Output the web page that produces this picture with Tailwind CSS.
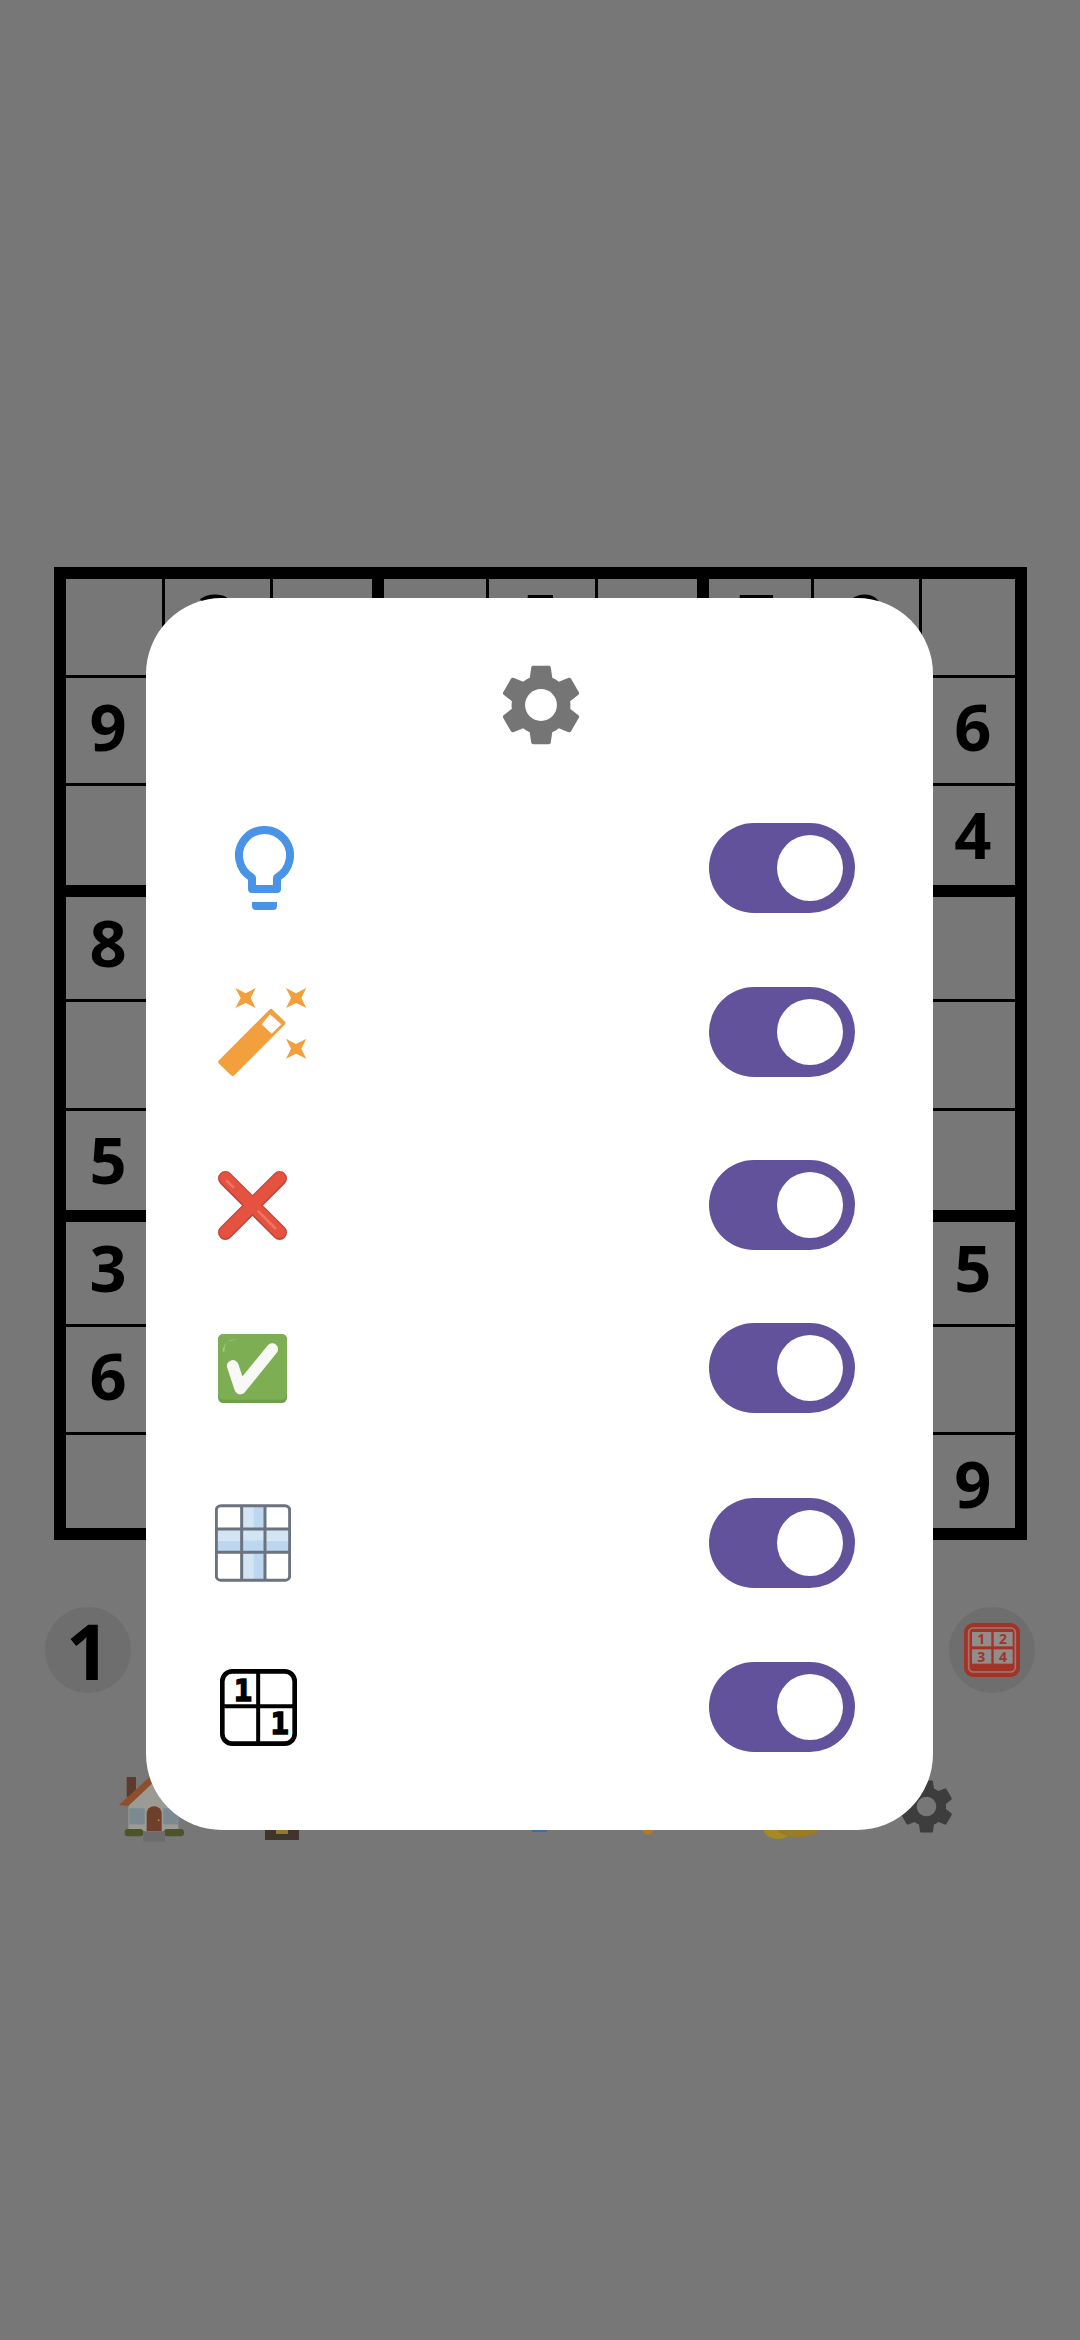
<!DOCTYPE html>
<html lang="en">
<head>
    <meta charset="utf-8">
    <title>Sudoku settings</title>
    <script src="https://cdn.jsdelivr.net/npm/@tailwindcss/browser@4"></script>
</head>
<body class="relative w-[1080px] h-[2340px] overflow-hidden bg-[#777777] font-['Noto_Sans',sans-serif]">
    <!-- Board -->
    <div class="pt-[567px] pl-[54px]">
        <div id="board" class="grid grid-cols-9 grid-rows-9 w-[973px] h-[973px]"></div>
    </div>

    <!-- Number pad, only the two ends show past the dialog -->
    <div class="flex justify-between items-center mt-[67px] px-[45px]">
        <div class="flex items-center justify-center w-[86px] h-[86px] rounded-full bg-[#6e6e6e]">
            <span class="text-[77px] leading-none font-bold text-black">1</span>
        </div>
        <div class="flex items-center justify-center w-[86px] h-[86px] rounded-full bg-[#6e6e6e]">
            <svg class="w-[56px] h-[54px]" viewBox="552 365 168 162">
                <rect x="552" y="365" width="168" height="162" rx="28" fill="#a03428"/>
                <rect x="566" y="380" width="140" height="132" rx="14" fill="#a03428" stroke="#a8746c" stroke-width="5"/>
                <rect x="576" y="392" width="58" height="43" fill="#928c8a"/>
                <rect x="641" y="392" width="57" height="43" fill="#928c8a"/>
                <rect x="576" y="444" width="58" height="43" fill="#928c8a"/>
                <rect x="641" y="444" width="57" height="43" fill="#928c8a"/>
                <g fill="#a03428" font-size="42" font-weight="700" text-anchor="middle" font-family="Noto Sans">
                    <text x="604" y="429">1</text>
                    <text x="669" y="429">2</text>
                    <text x="604" y="481">3</text>
                    <text x="669" y="481">4</text>
                </g>
            </svg>
        </div>
    </div>

    <!-- Bottom nav, mostly behind the dialog -->
    <div class="flex items-end h-[65px] mt-[84px] pl-[119px]">
        <svg class="w-[65px] h-[65px] shrink-0" viewBox="357 828 195 195">
            <rect x="380" y="828" width="28" height="60" fill="#5f3a2c"/>
            <polygon points="385,905 460,835 535,905 535,990 385,990" fill="#9b9a94"/>
            <polygon points="357,912 452,825 470,835 385,915" fill="#8f4f2c"/>
            <rect x="388" y="922" width="46" height="48" fill="#7a8a90"/>
            <rect x="490" y="922" width="46" height="48" fill="#7a8a90"/>
            <path d="M440 990 V938 a22 22 0 0 1 45 0 V990 Z" fill="#6e3f2a"/>
            <circle cx="476" cy="958" r="3" fill="#b0902c"/>
            <rect x="374" y="984" width="56" height="22" rx="10" fill="#4b5527"/>
            <rect x="492" y="984" width="60" height="22" rx="10" fill="#4b5527"/>
            <rect x="430" y="992" width="65" height="30" fill="#6c6c6c"/>
        </svg>
        <div class="shrink-0 flex justify-center w-[34px] h-[10px] mb-[2px] ml-[81px] bg-[#41342c]"><div class="w-[12px] h-[4px] bg-[#8f7a30]"></div></div>
        <div class="shrink-0 w-[15px] h-[3px] mb-[10px] ml-[233px] bg-[#3a6ea5]"></div>
        <div class="shrink-0 w-[10px] h-[6px] mb-[7px] ml-[96px] bg-[#b37a28] rounded-b-full"></div>
        <svg class="shrink-0 w-[54px] h-[9px] mb-[3px] ml-[111px]" viewBox="0 0 54 9">
            <ellipse cx="14" cy="0" rx="14" ry="9" fill="#a88a24"/>
            <ellipse cx="34" cy="0" rx="20" ry="7" fill="#9c7c20"/>
        </svg>
        <svg class="w-[65px] h-[65px] shrink-0 ml-[76px] mb-[3px]" viewBox="0 0 24 24" fill="#3d3d3d">
            <path d="M19.14 12.94c.04-.3.06-.61.06-.94 0-.32-.02-.64-.07-.94l2.03-1.58c.18-.14.23-.41.12-.61l-1.92-3.32c-.12-.22-.37-.29-.59-.22l-2.39.96c-.5-.38-1.03-.7-1.62-.94l-.36-2.54c-.04-.24-.24-.41-.48-.41h-3.84c-.24 0-.43.17-.47.41l-.36 2.54c-.59.24-1.13.57-1.62.94l-2.39-.96c-.22-.08-.47 0-.59.22L2.74 8.87c-.12.21-.08.47.12.61l2.03 1.58c-.05.3-.09.63-.09.94s.02.64.07.94l-2.03 1.58c-.18.14-.23.41-.12.61l1.92 3.32c.12.22.37.29.59.22l2.39-.96c.5.38 1.03.7 1.62.94l.36 2.54c.05.24.24.41.48.41h3.84c.24 0 .44-.17.47-.41l.36-2.54c.59-.24 1.13-.56 1.62-.94l2.39.96c.22.08.47 0 .59-.22l1.92-3.32c.12-.22.07-.47-.12-.61l-2.01-1.58zM12 15.6c-1.98 0-3.6-1.62-3.6-3.6s1.62-3.6 3.6-3.6 3.6 1.62 3.6 3.6-1.62 3.6-3.6 3.6z"/>
        </svg>
    </div>

    <!-- Settings dialog -->
    <div class="absolute top-[598px] left-[146px] w-[787px] h-[1232px] bg-white rounded-[76px] flex flex-col pt-[58px] pl-[69px] pr-[78px]">
        <svg class="w-[98px] h-[98px] self-center ml-[11px]" viewBox="0 0 24 24" fill="#757575">
            <path d="M19.14 12.94c.04-.3.06-.61.06-.94 0-.32-.02-.64-.07-.94l2.03-1.58c.18-.14.23-.41.12-.61l-1.92-3.32c-.12-.22-.37-.29-.59-.22l-2.39.96c-.5-.38-1.03-.7-1.62-.94l-.36-2.54c-.04-.24-.24-.41-.48-.41h-3.84c-.24 0-.43.17-.47.41l-.36 2.54c-.59.24-1.13.57-1.62.94l-2.39-.96c-.22-.08-.47 0-.59.22L2.74 8.87c-.12.21-.08.47.12.61l2.03 1.58c-.05.3-.09.63-.09.94s.02.64.07.94l-2.03 1.58c-.18.14-.23.41-.12.61l1.92 3.32c.12.22.37.29.59.22l2.39-.96c.5.38 1.03.7 1.62.94l.36 2.54c.05.24.24.41.48.41h3.84c.24 0 .44-.17.47-.41l.36-2.54c.59-.24 1.13-.56 1.62-.94l2.39.96c.22.08.47 0 .59-.22l1.92-3.32c.12-.22.07-.47-.12-.61l-2.01-1.58zM12 15.6c-1.98 0-3.6-1.62-3.6-3.6s1.62-3.6 3.6-3.6 3.6 1.62 3.6 3.6-1.62 3.6-3.6 3.6z"/>
            <circle cx="12" cy="12" r="3.9" fill="#ffffff"/>
        </svg>

        <!-- Hints -->
        <div class="flex justify-between items-center h-[90px] mt-[69px]">
            <svg class="w-[59px] h-[84px] ml-[20px]" viewBox="0 0 59 84" fill="none">
                <path d="M17 51.7 A25.5 25.5 0 1 1 42 51.7 V63 H17 Z" stroke="#4a94e8" stroke-width="8" stroke-linejoin="round"/>
                <path d="M17 76 H42 V80 a4 4 0 0 1 -4 4 H21 a4 4 0 0 1 -4 -4 Z" fill="#4a94e8"/>
            </svg>
            <div class="flex justify-end items-center w-[146px] h-[90px] pr-[12px] rounded-full bg-[#62529c]"><div class="w-[66px] h-[66px] rounded-full bg-white"></div></div>
        </div>

        <!-- Auto solve wand -->
        <div class="flex justify-between items-center h-[90px] mt-[74px]">
            <svg class="w-[89px] h-[89px] ml-[3px]" viewBox="84 88 267 267">
                <g fill="#f2a03d">
                    <path d="M136 88 L167 104 L197 88 L182 118 L197 148 L167 133 L136 148 L152 118 Z"/>
                    <path d="M288 88 L318 104 L349 88 L334 118 L349 148 L318 133 L288 148 L303 118 Z"/>
                    <path d="M288 240 L318 256 L349 240 L334 270 L349 300 L318 285 L288 300 L303 270 Z"/>
                    <polygon points="243,158 279,193 128,345 92,310" stroke="#f2a03d" stroke-width="14" stroke-linejoin="round"/>
                </g>
                <polygon points="240,167 274,197 245,225 215,197" fill="#ffffff"/>
            </svg>
            <div class="flex justify-end items-center w-[146px] h-[90px] pr-[12px] rounded-full bg-[#62529c]"><div class="w-[66px] h-[66px] rounded-full bg-white"></div></div>
        </div>

        <!-- Mistakes -->
        <div class="flex justify-between items-center h-[90px] mt-[83px]">
            <svg class="w-[69px] h-[69px] ml-[3px]" viewBox="85 95 205 205" fill="none" stroke-linecap="round">
                <path d="M107 117 L268 278 M268 117 L107 278" stroke="#c5443a" stroke-width="44"/>
                <path d="M107 116 L268 277 M268 116 L107 277" stroke="#e5523f" stroke-width="36"/>
                <path d="M112 125 L130 143 M205 215 L255 265" stroke="#ee7563" stroke-width="8"/>
            </svg>
            <div class="flex justify-end items-center w-[146px] h-[90px] pr-[12px] rounded-full bg-[#62529c]"><div class="w-[66px] h-[66px] rounded-full bg-white"></div></div>
        </div>

        <!-- Correct -->
        <div class="flex justify-between items-center h-[90px] mt-[73px]">
            <svg class="w-[69px] h-[69px] ml-[3px]" viewBox="86 583 205 205">
                <rect x="86" y="583" width="205" height="205" rx="16" fill="#6f9e48"/>
                <rect x="86" y="583" width="205" height="195" rx="16" fill="#7dae53"/>
                <path d="M100 635 Q102 600 145 597 L115 606 Q104 615 105 635 Z" fill="#a9cb8d"/>
                <path d="M130 678 L152 745 L247 628" fill="none" stroke="#f8f8f4" stroke-width="35" stroke-linecap="round" stroke-linejoin="round"/>
            </svg>
            <div class="flex justify-end items-center w-[146px] h-[90px] pr-[12px] rounded-full bg-[#62529c]"><div class="w-[66px] h-[66px] rounded-full bg-white"></div></div>
        </div>

        <!-- Row and column highlight -->
        <div class="flex justify-between items-center h-[90px] mt-[85px]">
            <svg class="w-[76px] h-[78px]" viewBox="75 73 228 232">
                <rect x="155" y="78" width="35" height="222" fill="#d3e4f3"/>
                <rect x="190" y="78" width="35" height="222" fill="#bcd7ef"/>
                <rect x="80" y="147" width="218" height="35" fill="#d3e4f3"/>
                <rect x="80" y="182" width="218" height="35" fill="#bcd7ef"/>
                <path d="M155 78 V300 M225 78 V300 M80 147 H298 M80 217 H298" stroke="#6b7280" stroke-width="9"/>
                <rect x="79" y="77" width="220" height="224" rx="14" fill="none" stroke="#6b7280" stroke-width="9"/>
            </svg>
            <div class="flex justify-end items-center w-[146px] h-[90px] pr-[12px] rounded-full bg-[#62529c]"><div class="w-[66px] h-[66px] rounded-full bg-white"></div></div>
        </div>

        <!-- Duplicate numbers -->
        <div class="flex justify-between items-center h-[90px] mt-[74px]">
            <svg class="w-[77px] h-[77px] ml-[5px]" viewBox="90 565 232 232">
                <path d="M205 570 V790 M96 677 H316" stroke="#000" stroke-width="12"/>
                <rect x="97" y="572" width="218" height="218" rx="30" fill="none" stroke="#000" stroke-width="14"/>
                <g font-family="DejaVu Sans Mono" font-weight="700" font-size="90" text-anchor="middle" fill="#000" stroke="#000" stroke-width="5">
                    <text x="159" y="660">1</text>
                    <text x="270" y="760">1</text>
                </g>
            </svg>
            <div class="flex justify-end items-center w-[146px] h-[90px] pr-[12px] rounded-full bg-[#62529c]"><div class="w-[66px] h-[66px] rounded-full bg-white"></div></div>
        </div>
    </div>

    <script>
        // Border per row and column, padding evens them out so digits stay centred in the 108px box
        const rowClasses = [
            'border-t-[12px] pb-[17px]',
            'border-t-[3px] pb-[3px]',
            'border-t-[3px] border-b-[6px] pt-[3px]',
            'border-t-[6px] pb-[6px]',
            'border-t-[3px] pb-[3px]',
            'border-t-[3px] border-b-[6px] pt-[3px]',
            'border-t-[6px] pb-[6px]',
            'border-t-[3px] pb-[3px]',
            'border-t-[3px] border-b-[12px] pt-[9px]'
        ];
        const colClasses = [
            'border-l-[12px] pr-[12px]',
            'border-l-[3px] pr-[3px]',
            'border-l-[3px] border-r-[6px] pl-[3px]',
            'border-l-[6px] pr-[6px]',
            'border-l-[3px] pr-[3px]',
            'border-l-[3px] border-r-[6px] pl-[3px]',
            'border-l-[6px] pr-[6px]',
            'border-l-[3px] pr-[3px]',
            'border-l-[3px] border-r-[12px] pl-[9px]'
        ];
        const digits = {
            '0,1': 3, '0,4': 5, '0,6': 7, '0,7': 2,
            '1,0': 9, '1,8': 6,
            '2,8': 4,
            '3,0': 8,
            '5,0': 5,
            '6,0': 3, '6,8': 5,
            '7,0': 6,
            '8,8': 9
        };

        const board = document.getElementById('board');
        for (let r = 0; r < 9; r++) {
            for (let c = 0; c < 9; c++) {
                const cell = document.createElement('div');
                cell.className = `flex items-center justify-center min-w-0 min-h-0 border-black text-[65px] leading-none font-bold text-black ${rowClasses[r]} ${colClasses[c]}`;
                const digit = digits[`${r},${c}`];
                if (digit) {
                    const span = document.createElement('span');
                    span.className = 'mt-[-5px]';
                    span.textContent = digit;
                    cell.appendChild(span);
                }
                board.appendChild(cell);
            }
        }
    </script>
</body>
</html>
